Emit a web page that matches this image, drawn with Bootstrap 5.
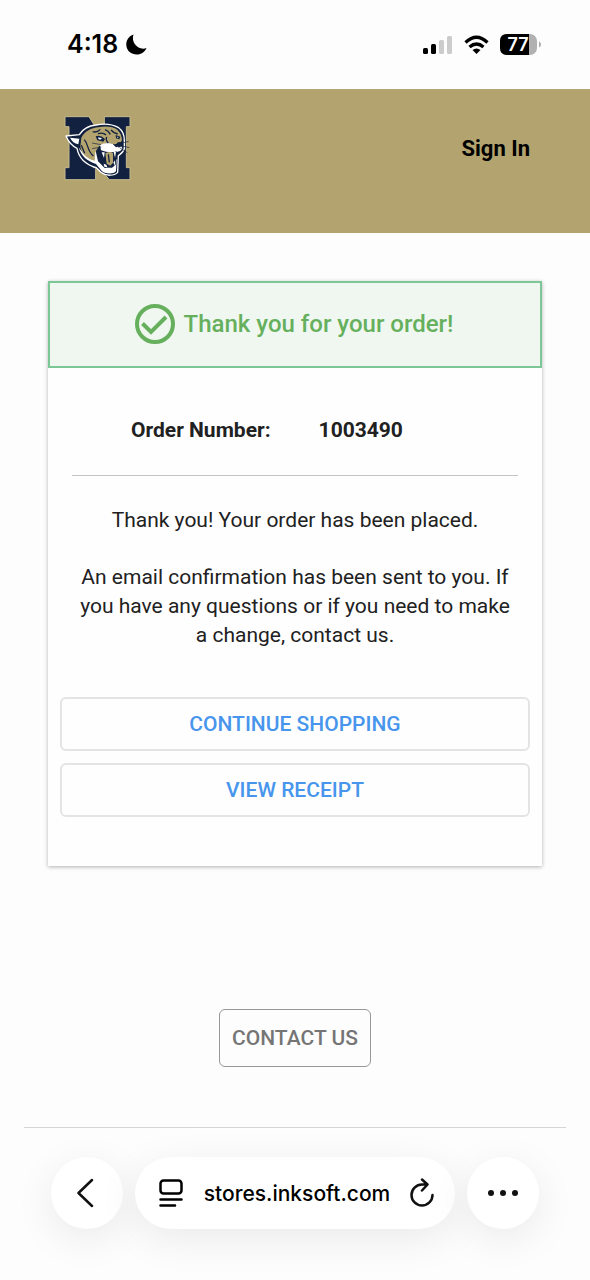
<!DOCTYPE html>
<html lang="en">
<head>
<meta charset="utf-8">
<meta name="viewport" content="width=device-width, initial-scale=1">
<title>Order confirmation</title>
<link href="https://cdn.jsdelivr.net/npm/bootstrap@5.3.0/dist/css/bootstrap.min.css" rel="stylesheet">
<style>
  body { font-family: Roboto, "Liberation Sans", sans-serif; font-size: 21px; line-height: 29px; color: #212121; background: #fdfdfd; }
  svg { display: block; flex: none; }
  .phone-status { height: 89px; padding: 0 49px 0 67px; font-family: Inter, sans-serif; color: #000; }
  .clock { font-size: 25px; font-weight: 600; }
  .store-header { background: #b3a46f; height: 144px; padding: 26px 60px 0 63px; }
  .sign-in { color: #000; font-size: 22px; font-weight: 700; line-height: 32px; margin-top: 18px; }
  .page-body { padding: 48px 48px 0; }
  .order-card { background: #fefefe; box-shadow: 0 1px 4px rgba(0,0,0,.3); }
  .order-banner { height: 87px; padding-right: 3px; padding-bottom: 2px; border: 2px solid #7cc795; background: #f0f7f1; color: #66b05d; }
  .order-banner h1 { font-size: 24px; font-weight: 500; line-height: 32px; }
  .order-number { padding: 48px 0 30px 83px; gap: 48px; font-weight: 700; }
  .rule { border: 0; border-top: 1px solid #c4c4c4; opacity: 1; margin: 0; }
  .rule-foot { border-color: #d6d6d6; }
  .message { padding: 30px 6px 47px; }
  .message p { margin-bottom: 28px; }
  .order-actions { gap: 12px; padding: 0 12px 49px; }
  .btn-store { --bs-btn-color: #4795ec; --bs-btn-border-color: #e4e4e4; --bs-btn-font-size: 21px; --bs-btn-font-weight: 500; --bs-btn-border-width: 2px; --bs-btn-border-radius: 6px; --bs-btn-line-height: 30px; --bs-btn-padding-y: 10px; }
  .btn-contact { --bs-btn-color: #757575; --bs-btn-border-color: #979797; --bs-btn-border-width: 1px; --bs-btn-padding-y: 13px; --bs-btn-padding-x: 12px; }
  .contact-area { padding: 143px 24px 60px; }
  .browser-bar { padding: 29px 51px 51px; gap: 12px; font-family: Inter, sans-serif; }
  .pill { height: 72px; border: 0; border-radius: 36px; background: #fff; color: #111; box-shadow: 0 10px 40px rgba(0,0,0,.08); }
  .pill-round { width: 72px; flex: none; }
  .pill-address { padding: 0 21px 0 24px; }
  .address { min-width: 0; width: 100%; border: 0; background: none; color: #000; font-size: 21px; font-weight: 500; text-align: center; outline: 0; padding: 0; }
</style>
</head>
<body>
<div class="phone-status d-flex align-items-center justify-content-between">
  <div class="d-flex align-items-center gap-1">
    <span class="clock">4:18</span>
    <svg class="ms-1" width="21" height="21" viewBox="0 0 21 21" aria-hidden="true"><path d="M7.500.5C3 2 0 6 .3 11c.4 6 5 9.500 10.500 9.500 4.500 0 8-2.500 9.700-6.500C13 17 4.500 9 7.500.5Z" fill="#000"/></svg>
  </div>
  <div class="d-flex align-items-center">
    <svg width="30" height="20" viewBox="0 0 30 20" aria-hidden="true"><rect y="13" width="5" height="6" rx="1.500"/><rect x="8" y="9" width="5" height="10" rx="1.500"/><path fill="#ccc" d="M17.500 5h2q1.500 0 1.500 1.500v11q0 1.500-1.500 1.500h-2q-1.500 0-1.500-1.500v-11q0-1.500 1.500-1.500ZM25.500 1h2Q29 1 29 2.500v15q0 1.500-1.500 1.500h-2q-1.500 0-1.500-1.500v-15Q24 1 25.500 1Z"/></svg>
    <svg class="ms-2 me-2" width="31" height="20" viewBox="0 0 31 20" fill="none" stroke="#000" stroke-width="3.200" aria-hidden="true"><path d="M4.500 7.500Q15.500-3 26.500 7.500M8.500 12q7-6 14 0"/><path d="M11.500 15q4-3 8 0l-4 4Z" fill="#000" stroke="none"/></svg>
    <svg width="41" height="22" viewBox="0 0 41 22" role="img" aria-label="Battery 77 percent"><rect width="37" height="21" rx="7" fill="#b1b1b1"/><path d="M7 0H29V21H7Q0 21 0 14V7Q0 0 7 0Z"/><path d="M39 7.500q2 1 2 3t-2 3Z" fill="#aaa"/><text x="18" y="17" text-anchor="middle" fill="#fff" font-size="18" font-weight="600">77</text></svg>
  </div>
</div>

<header class="store-header d-flex align-items-start justify-content-between">
  <a href="#" aria-label="Store home">
    <svg width="70" height="68" viewBox="39 32 210 204" stroke-linejoin="round">
      <path d="M45 37H117L150 90 163 67V37H240V67H229V190H240V226H178L130 170V190H137V226H45V190H57V67H45Z" fill="#12213f" stroke="#c5b98f" stroke-width="3"/>
      <path d="M48 95 88 91C98 74 118 64 138 62c24-5 50-2 68 8 11 8 17 22 17 38l0 24c-2 12-10 16-18 22l-2 50c-10 11-35 12-50 0l-14-14C111 182 88 168 81 132 65 124 55 112 48 95Z" fill="#12213f" stroke="#fff" stroke-width="4"/>
      <path d="M60 100 88 103 85 120C73 118 66 111 60 100ZM86 129c8 28 25 41 52 50l18 22c13 9 34 9 42 0l2-38-14 26-22 2-20-20-7-32-18 20C103 152 94 142 86 129Z" fill="#fff"/>
      <path d="M94 100C105 80 124 71 145 69c23-5 45-1 57 7 10 9 14 21 14 32l-6 9-17 3-24-4-22 10-11 17-2 26C113 164 95 150 91 127Z" fill="#b3a46f"/>
      <path d="M150 122q19-10 38-3l10 10 15-5 4 8q-3 9-14 10-27 5-50-4Z" fill="#fff"/>
      <path d="M151 142q25 8 49-1l-3 40-11 9-19-3Q153 174 151 142Z" fill="#12213f"/>
      <path d="M166 147q15-8 23 0l0 28-8 9-11-6Z" fill="#b3a46f"/>
      <path d="M155 144l9 0-2 17ZM191 143l7-1-3 18ZM161 178l8 3 3 8-9-2ZM190 175l5-7 0 16Z" fill="#fff"/>
      <path d="M175 150l3 24" stroke="#12213f" stroke-width="4"/>
      <path d="M200 116q9-5 17-1l-2 11-9 4ZM137 96q14-5 28 8l-5 8-18-4ZM197 92l14 5-3 8-10-3Z" fill="#12213f"/>
      <path d="M145 99l11 3-5 4-6-2ZM201 97l5 1-3 3Z" fill="#fff"/>
      <path d="M103 106C116 121 111 139 130 155M94 123l10 24M128 82Q141 86 151 75M144 88q15-5 24 4M165 76q10 3 16 14M183 77q6 8 20 12M170 98q-4 10 5 18" fill="none" stroke="#12213f" stroke-width="4"/>
      <path d="M213 117l23-6M213 124l25 6M210 131l22 14M126 116l27 5M126 133l28-5" fill="none" stroke="#12213f" stroke-width="2"/>
    </svg>
  </a>
  <a href="#" class="sign-in text-decoration-none">Sign In</a>
</header>

<main class="page-body">
  <section class="order-card">
    <div class="order-banner d-flex align-items-center justify-content-center">
      <svg class="me-2" width="42" height="42" viewBox="0 0 42 42" fill="none" stroke="#66b05d" stroke-width="4" aria-hidden="true"><circle cx="21" cy="21" r="18"/><path d="M8.500 20.500 17 29 32 14"/></svg>
      <h1 class="m-0">Thank you for your order!</h1>
    </div>
    <div class="order-number d-flex"><span>Order Number:</span><span>1003490</span></div>
    <hr class="rule mx-4">
    <div class="message mx-4 text-center">
      <p>Thank you! Your order has been placed.</p>
      <p class="mb-0">An email confirmation has been sent to you. If you have any questions or if you need to make a change, contact us.</p>
    </div>
    <div class="d-grid order-actions">
      <button type="button" class="btn btn-store">CONTINUE SHOPPING</button>
      <button type="button" class="btn btn-store">VIEW RECEIPT</button>
    </div>
  </section>
</main>

<div class="contact-area text-center">
  <button type="button" class="btn btn-store btn-contact">CONTACT US</button>
</div>
<hr class="rule rule-foot mx-4">

<nav class="browser-bar d-flex" aria-label="Browser">
  <button type="button" class="pill pill-round d-flex align-items-center justify-content-center p-0" aria-label="Back">
    <svg width="20" height="30" viewBox="0 0 20 30" fill="none" stroke="#111" stroke-width="2.500" stroke-linecap="round" stroke-linejoin="round"><path d="M15 2 1.500 15 15 28"/></svg>
  </button>
  <div class="pill pill-address d-flex align-items-center flex-grow-1">
    <button type="button" class="btn p-0 border-0" aria-label="Page menu">
      <svg width="25" height="28" viewBox="0 0 25 28" fill="none" stroke="#000" stroke-width="2.500" stroke-linecap="round"><rect x="1.500" y="1.500" width="21" height="13" rx="3"/><path d="M1.500 20.500h21M1.500 26.500h14.500"/></svg>
    </button>
    <input class="address" type="text" value="stores.inksoft.com" aria-label="Address">
    <button type="button" class="btn p-0 border-0" aria-label="Reload">
      <svg width="24" height="30" viewBox="0 0 24 30" fill="none" stroke="#111" stroke-width="2.500" stroke-linecap="round" stroke-linejoin="round"><path d="M17 6.500H12A10.500 10.500 0 1 0 22.500 17M12 1.500 17.500 6.500 12 12.500"/></svg>
    </button>
  </div>
  <button type="button" class="pill pill-round d-flex align-items-center justify-content-center p-0" aria-label="More">
    <svg width="30" height="8" viewBox="0 0 30 8" fill="#111"><circle cx="3" cy="4" r="3"/><circle cx="15" cy="4" r="3"/><circle cx="27" cy="4" r="3"/></svg>
  </button>
</nav>
<script src="https://cdn.jsdelivr.net/npm/bootstrap@5.3.0/dist/js/bootstrap.bundle.min.js"></script>
</body>
</html>
